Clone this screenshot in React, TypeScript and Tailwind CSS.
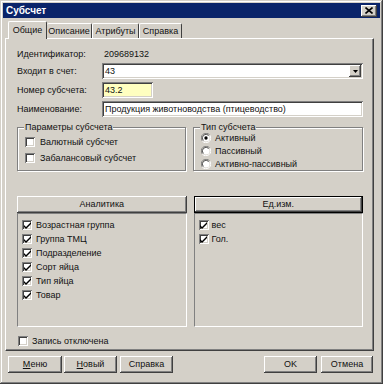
import React from "react";

const raised =
  "shadow-[inset_-1px_-1px_#404040,inset_1px_1px_#ffffff,inset_-2px_-2px_#808080,inset_2px_2px_#d4d0c8]";
const sunken =
  "shadow-[inset_1px_1px_#808080,inset_-1px_-1px_#ffffff,inset_2px_2px_#404040,inset_-2px_-2px_#d4d0c8]";

function Check({ checked }: { checked?: boolean }) {
  return (
    <div className={`w-[10px] h-[10px] bg-white ${sunken} flex items-center justify-center shrink-0`}>
      {checked && (
        <svg width="7" height="7" viewBox="0 0 7 7">
          <path d="M0 3 L0 5 L2 7 L7 2 L7 0 L2 5 Z" fill="#000" />
        </svg>
      )}
    </div>
  );
}

function Radio({ checked }: { checked?: boolean }) {
  return (
    <svg width="10" height="10" viewBox="0 0 12 12" className="shrink-0">
      <path d="M10.5 2.5 A5.2 5.2 0 0 0 1.5 9.5" stroke="#808080" strokeWidth="1.2" fill="none" />
      <path d="M1.5 9.5 A5.2 5.2 0 0 0 10.5 2.5" stroke="#ffffff" strokeWidth="1.2" fill="none" />
      <circle cx="6" cy="6" r="4.3" fill="#fff" />
      <path d="M9.2 3 A4.2 4.2 0 0 0 2.8 9" stroke="#404040" strokeWidth="1.1" fill="none" />
      {checked && <circle cx="6" cy="6" r="2" fill="#000" />}
    </svg>
  );
}

function Btn({ children, className = "" }: { children: React.ReactNode; className?: string }) {
  return (
    <div className={`h-[17px] bg-[#d4d0c8] ${raised} flex items-center justify-center leading-none ${className}`}>
      {children}
    </div>
  );
}

export default function App() {
  return (
    <div
      className="w-[383px] h-[384px] bg-[#d4d0c8] text-[9px] leading-[11px] text-[#111] overflow-hidden shadow-[inset_-1px_-1px_#404040,inset_1px_1px_#d4d0c8,inset_-2px_-2px_#808080,inset_2px_2px_#ffffff]"
      style={{ fontFamily: '"Liberation Sans", Arial, sans-serif' }}
    >
      <div className="px-[3px] pt-[3px] flex flex-col">
        {/* Title bar */}
        <div className="h-[15px] bg-[#0a246a] flex items-center justify-between pl-[3px] pr-[3px]">
          <span className="text-white font-bold text-[10px] leading-none">Субсчет</span>
          <div className={`w-[16px] h-[12px] ${raised} bg-[#d4d0c8] flex items-center justify-center`}>
            <svg width="8" height="7" viewBox="0 0 8 7">
              <path d="M0.5 0.5 L7.5 6.5 M7.5 0.5 L0.5 6.5" stroke="#000" strokeWidth="1.6" />
            </svg>
          </div>
        </div>

        {/* Tabs */}
        <div className="flex items-end h-[18px] pl-[5px] mt-[2px] relative z-10">
          <div className="w-[39px] h-[18px] flex items-center justify-center border-t border-l border-white border-r border-r-[#404040] rounded-t-[2px] bg-[#d4d0c8] -mb-[1px] pb-[1px]">
            Общие
          </div>
          <div className="w-[45px] h-[15px] flex items-center justify-center border-t border-white border-r border-r-[#404040] rounded-t-[2px]">
            Описание
          </div>
          <div className="w-[47px] h-[15px] flex items-center justify-center border-t border-white border-l border-r border-r-[#404040] rounded-t-[2px]">
            Атрибуты
          </div>
          <div className="w-[43px] h-[15px] flex items-center justify-center border-t border-white border-l border-r border-r-[#404040] rounded-t-[2px]">
            Справка
          </div>
        </div>

        {/* Panel */}
        <div className="ml-[2px] w-[369px] h-[313px] border-t border-l border-white border-r border-b border-r-[#404040] border-b-[#404040] shadow-[inset_-1px_-1px_#808080] pl-[11px] pr-[10px] pt-[9px] flex flex-col">
          <div className="h-[12px] flex items-center">
            <span className="w-[85px]">Идентификатор:</span>
            <span className="ml-[2px]">209689132</span>
          </div>
          <div className="h-[16px] flex items-center mt-[3px]">
            <span className="w-[85px]">Входит в счет:</span>
            <div className={`flex-1 h-[16px] bg-white ${sunken} flex items-center pl-[3px] pr-[2px]`}>
              <span className="flex-1">43</span>
              <div className={`w-[12px] h-[12px] ${raised} bg-[#d4d0c8] flex items-center justify-center`}>
                <svg width="5" height="3" viewBox="0 0 5 3">
                  <path d="M0 0 H5 L2.5 3 Z" fill="#000" />
                </svg>
              </div>
            </div>
          </div>
          <div className="h-[16px] flex items-center mt-[3px]">
            <span className="w-[85px]">Номер субсчета:</span>
            <div className={`w-[51px] h-[16px] bg-[#ffffc0] ${sunken} flex items-center pl-[3px]`}>43.2</div>
          </div>
          <div className="h-[16px] flex items-center mt-[3px]">
            <span className="w-[85px]">Наименование:</span>
            <div className={`flex-1 h-[16px] bg-white ${sunken} flex items-center pl-[3px]`}>
              Продукция животноводства (птицеводство)
            </div>
          </div>

          {/* Group boxes */}
          <div className="flex gap-[7px] mt-[10px]">
            <div className="relative w-[169px] h-[44px] border border-[#808080] shadow-[1px_1px_0_#ffffff,inset_1px_1px_0_#ffffff] pl-[7px] pt-[9px] flex flex-col gap-[6px]">
              <span className="absolute -top-[6px] left-[6px] bg-[#d4d0c8] px-[1px] leading-[11px]">Параметры субсчета</span>
              <div className="flex items-center gap-[5px] h-[10px]">
                <Check />
                <span>Валютный субсчет</span>
              </div>
              <div className="flex items-center gap-[5px] h-[10px]">
                <Check />
                <span>Забалансовый субсчет</span>
              </div>
            </div>
            <div className="relative w-[170px] h-[44px] border border-[#808080] shadow-[1px_1px_0_#ffffff,inset_1px_1px_0_#ffffff] pl-[7px] pt-[4px] flex flex-col gap-[1px]">
              <span className="absolute -top-[6px] left-[6px] bg-[#d4d0c8] px-[1px] leading-[11px]">Тип субсчета</span>
              <div className="flex items-center gap-[4px] h-[12px]">
                <Radio checked />
                <span>Активный</span>
              </div>
              <div className="flex items-center gap-[4px] h-[12px]">
                <Radio />
                <span>Пассивный</span>
              </div>
              <div className="flex items-center gap-[4px] h-[12px]">
                <Radio />
                <span>Активно-пассивный</span>
              </div>
            </div>
          </div>

          {/* Lists */}
          <div className="flex gap-[7px] mt-[25px]">
            <div className="w-[170px] flex flex-col">
              <Btn>Аналитика</Btn>
              <div className="h-[114px] border-l border-t border-[#808080] border-r border-b border-r-white border-b-white pl-[4px] pt-[6px] flex flex-col gap-[4px]">
                {["Возрастная группа", "Группа ТМЦ", "Подразделение", "Сорт яйца", "Тип яйца", "Товар"].map((t) => (
                  <div key={t} className="flex items-center gap-[4px] h-[10px]">
                    <Check checked />
                    <span>{t}</span>
                  </div>
                ))}
              </div>
            </div>
            <div className="w-[170px] flex flex-col">
              <div className="h-[17px] border border-black">
                <div className={`h-[15px] bg-[#d4d0c8] ${raised} flex items-center justify-center leading-none`}>Ед.изм.</div>
              </div>
              <div className="h-[114px] border-l border-t border-[#808080] border-r border-b border-r-white border-b-white pl-[4px] pt-[6px] flex flex-col gap-[4px]">
                {["вес", "Гол."].map((t) => (
                  <div key={t} className="flex items-center gap-[3px] h-[10px]">
                    <Check checked />
                    <span>{t}</span>
                  </div>
                ))}
              </div>
            </div>
          </div>

          <div className="flex items-center gap-[4px] mt-[9px] ml-[1px] h-[10px]">
            <Check />
            <span>Запись отключена</span>
          </div>
        </div>

        {/* Bottom buttons */}
        <div className="flex mt-[5px] pl-[5px] pr-[7px]">
          <Btn className="w-[54px]">
            <span><u>М</u>еню</span>
          </Btn>
          <Btn className="w-[53px] ml-[2px]">
            <span><u>Н</u>овый</span>
          </Btn>
          <Btn className="w-[53px] ml-[3px]">Справка</Btn>
          <div className="flex-1" />
          <Btn className="w-[53px]">OK</Btn>
          <Btn className="w-[52px] ml-[4px]">Отмена</Btn>
        </div>
      </div>
    </div>
  );
}
